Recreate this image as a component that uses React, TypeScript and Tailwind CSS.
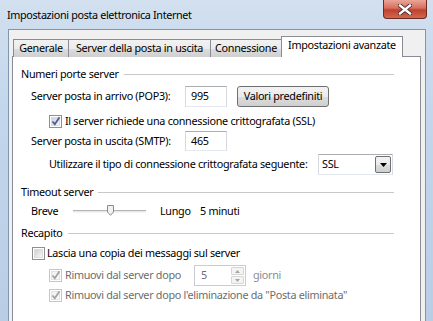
import React from 'react';

const Check: React.FC<{ checked?: boolean; disabled?: boolean }> = ({ checked, disabled }) => (
  <div
    className={`w-[13px] h-[13px] shrink-0 border flex items-center justify-center bg-white ${
      disabled ? 'border-[#c6c6c6]' : 'border-[#8e8f8f]'
    }`}
  >
    <div
      className={`w-[9px] h-[9px] relative ${
        disabled
          ? 'bg-[linear-gradient(135deg,#f0f0f0,#fcfcfc)] border border-[#e3e3e3]'
          : 'bg-[linear-gradient(135deg,#cdd1d6,#f7f7f7)] border border-[#dcdcdc]'
      }`}
    >
      {checked && (
        <svg className="absolute -left-[2px] -top-[3px]" width="12" height="12" viewBox="0 0 12 12">
          <path
            d="M2.5 6.5 L4.8 9.2 L9.5 2.2"
            fill="none"
            stroke={disabled ? '#a3a3a3' : '#4a5f97'}
            strokeWidth="1.8"
          />
        </svg>
      )}
    </div>
  </div>
);

const GroupTitle: React.FC<{ label: string; className: string }> = ({ label, className }) => (
  <div className={`flex items-center h-[16px] pl-[8px] pr-[26px] ${className}`}>
    <span>{label}</span>
    <div className="flex-1 h-px bg-[#c8c8c8] ml-[5px]"></div>
  </div>
);

const Tab: React.FC<{ label: string; w: string }> = ({ label, w }) => (
  <div
    className={`${w} h-[18px] border border-r-0 border-b-0 border-[#898c95] bg-[linear-gradient(180deg,#f2f2f2_0%,#ebebeb_50%,#dddddd_51%,#cfcfcf_100%)] flex items-center justify-center leading-none pb-[1px]`}
  >
    {label}
  </div>
);

export default function App() {
  return (
    <div className="w-[433px] h-[321px] overflow-hidden relative whitespace-nowrap bg-[linear-gradient(180deg,#d2e0ef_0%,#c3d6eb_35%,#b9cde5_100%)] font-['Segoe_UI','Noto_Sans',sans-serif] text-[10.8px] tracking-[-0.3px] text-black">
      {/* title bar */}
      <div className="h-[29px] pl-[7px] pt-[7px] leading-[16px] text-[10.8px] tracking-[-0.35px] text-black">
        Impostazioni posta elettronica Internet
      </div>
      <div className="absolute right-[6px] top-0 w-[44px] h-[19px] rounded-b-[4px] border border-t-0 border-[#6e2b23] bg-[linear-gradient(180deg,#eaa697_0%,#d86f5e_45%,#c2402f_55%,#cf6a4e_100%)] flex items-center justify-center">
        <svg width="14" height="11" viewBox="0 0 14 11">
          <path d="M2 1.5 L12 9.5 M12 1.5 L2 9.5" stroke="#3b2020" strokeWidth="4" strokeLinecap="square" />
          <path d="M2 1.5 L12 9.5 M12 1.5 L2 9.5" stroke="#ffffff" strokeWidth="2.4" strokeLinecap="square" />
        </svg>
      </div>

      {/* client area */}
      <div className="ml-[8px] mr-[7px] h-[300px] bg-[#f0f0f0] border border-[#8096b0] pt-[6px] px-[3px]">
        {/* tabs */}
        <div className="flex items-end pl-[1px] h-[21px] relative z-10">
          <Tab label="Generale" w="w-[55px]" />
          <Tab label="Server della posta in uscita" w="w-[142px]" />
          <div className="w-[72px] h-[18px] border border-b-0 border-[#898c95] bg-[linear-gradient(180deg,#f2f2f2_0%,#ebebeb_50%,#dddddd_51%,#cfcfcf_100%)] flex items-center justify-center leading-none pb-[1px]">
            Connessione
          </div>
          <div className="w-[122px] h-[21px] -ml-[1px] border border-b-0 border-[#898c95] bg-white flex items-center justify-center leading-none pb-[3px]">
            Impostazioni avanzate
          </div>
        </div>

        {/* panel */}
        <div className="-mt-[1px] w-[409px] h-[280px] bg-white border border-[#898c95] pt-px">
          <GroupTitle label="Numeri porte server" className="mt-[8px]" />

          <div className="mt-[4px] h-[21px] flex items-center">
            <span className="ml-[18px] w-[154px]">Server posta in arrivo (POP3):</span>
            <div className="w-[42px] h-[21px] border border-[#abadb3] border-b-[#e3e9ef] border-x-[#d5d9e0] flex items-center pl-[5px]">
              995
            </div>
            <div className="ml-[10px] w-[92px] h-[21px] rounded-[3px] border border-[#707070] bg-[linear-gradient(180deg,#f2f2f2_0%,#ebebeb_50%,#dddddd_51%,#cfcfcf_100%)] flex items-center justify-center leading-none pb-[1px]">
              Valori predefiniti
            </div>
          </div>

          <div className="mt-[7px] h-[14px] flex items-center">
            <div className="ml-[36px]">
              <Check checked />
            </div>
            <span className="ml-[3px]">Il server richiede una connessione crittografata (SSL)</span>
          </div>

          <div className="mt-[3px] h-[20px] flex items-center">
            <span className="ml-[18px] w-[154px]">Server posta in uscita (SMTP):</span>
            <div className="w-[42px] h-[20px] border border-[#abadb3] border-b-[#e3e9ef] border-x-[#d5d9e0] flex items-center pl-[5px]">
              465
            </div>
          </div>

          <div className="mt-[3px] h-[21px] flex items-center">
            <span className="ml-[36px] w-[269px]">Utilizzare il tipo di connessione crittografata seguente:</span>
            <div className="w-[75px] h-[21px] border border-[#abadb3] border-b-[#e3e9ef] border-x-[#d5d9e0] flex items-center justify-between pl-[3px] pr-[1px]">
              <span>SSL</span>
              <div className="w-[16px] h-[17px] rounded-[2px] border border-[#707070] bg-[linear-gradient(180deg,#f2f2f2_0%,#ebebeb_50%,#dddddd_51%,#cfcfcf_100%)] flex items-center justify-center">
                <svg width="7" height="4" viewBox="0 0 7 4">
                  <path d="M0 0 L7 0 L3.5 4 Z" fill="#000" />
                </svg>
              </div>
            </div>
          </div>

          <GroupTitle label="Timeout server" className="mt-[9px]" />

          <div className="mt-[3px] h-[16px] flex items-center">
            <span className="ml-[18px] w-[42px]">Breve</span>
            <div className="w-[73px] h-[16px] relative flex items-center">
              <div className="w-full h-[3px] border-t border-[#b4b4b4] border-b border-b-[#f4f4f4] bg-[#e7eaea]"></div>
              <svg className="absolute left-[34px] top-[2px]" width="7" height="11" viewBox="0 0 7 11">
                <path d="M0.5 0.5 H6.5 V7 L3.5 10.3 L0.5 7 Z" fill="#f1f1f1" stroke="#8a8a8a" />
              </svg>
            </div>
            <span className="ml-[14px] w-[40px]">Lungo</span>
            <span>5 minuti</span>
          </div>

          <GroupTitle label="Recapito" className="mt-[6px]" />

          <div className="mt-[5px] h-[14px] flex items-center">
            <div className="ml-[19px]">
              <Check />
            </div>
            <span className="ml-[2px]">Lascia una copia dei messaggi sul server</span>
          </div>

          <div className="mt-[5px] h-[21px] flex items-center text-[#6d6d6d]">
            <div className="ml-[36px]">
              <Check checked disabled />
            </div>
            <span className="ml-[3px] w-[129px]">Rimuovi dal server dopo</span>
            <div className="w-[52px] h-[21px] border border-[#c9ccd2] flex items-center justify-between pl-[6px] pr-px">
              <span className="text-[#6d6d6d]">5</span>
              <div className="w-[13px] h-[17px] flex flex-col">
                <div className="h-[8px] border border-[#d6d6d6] rounded-[1px] bg-[#f4f4f4] flex items-center justify-center">
                  <svg width="5" height="3" viewBox="0 0 5 3">
                    <path d="M0 3 L5 3 L2.5 0 Z" fill="#a6a6a6" />
                  </svg>
                </div>
                <div className="h-[8px] mt-px border border-[#d6d6d6] rounded-[1px] bg-[#f4f4f4] flex items-center justify-center">
                  <svg width="5" height="3" viewBox="0 0 5 3">
                    <path d="M0 0 L5 0 L2.5 3 Z" fill="#a6a6a6" />
                  </svg>
                </div>
              </div>
            </div>
            <span className="ml-[7px] text-[#8d8d8d]">giorni</span>
          </div>

          <div className="mt-[2px] h-[14px] flex items-center text-[#6d6d6d]">
            <div className="ml-[36px]">
              <Check checked disabled />
            </div>
            <span className="ml-[3px]">Rimuovi dal server dopo l'eliminazione da "Posta eliminata"</span>
          </div>
        </div>
      </div>
    </div>
  );
}
